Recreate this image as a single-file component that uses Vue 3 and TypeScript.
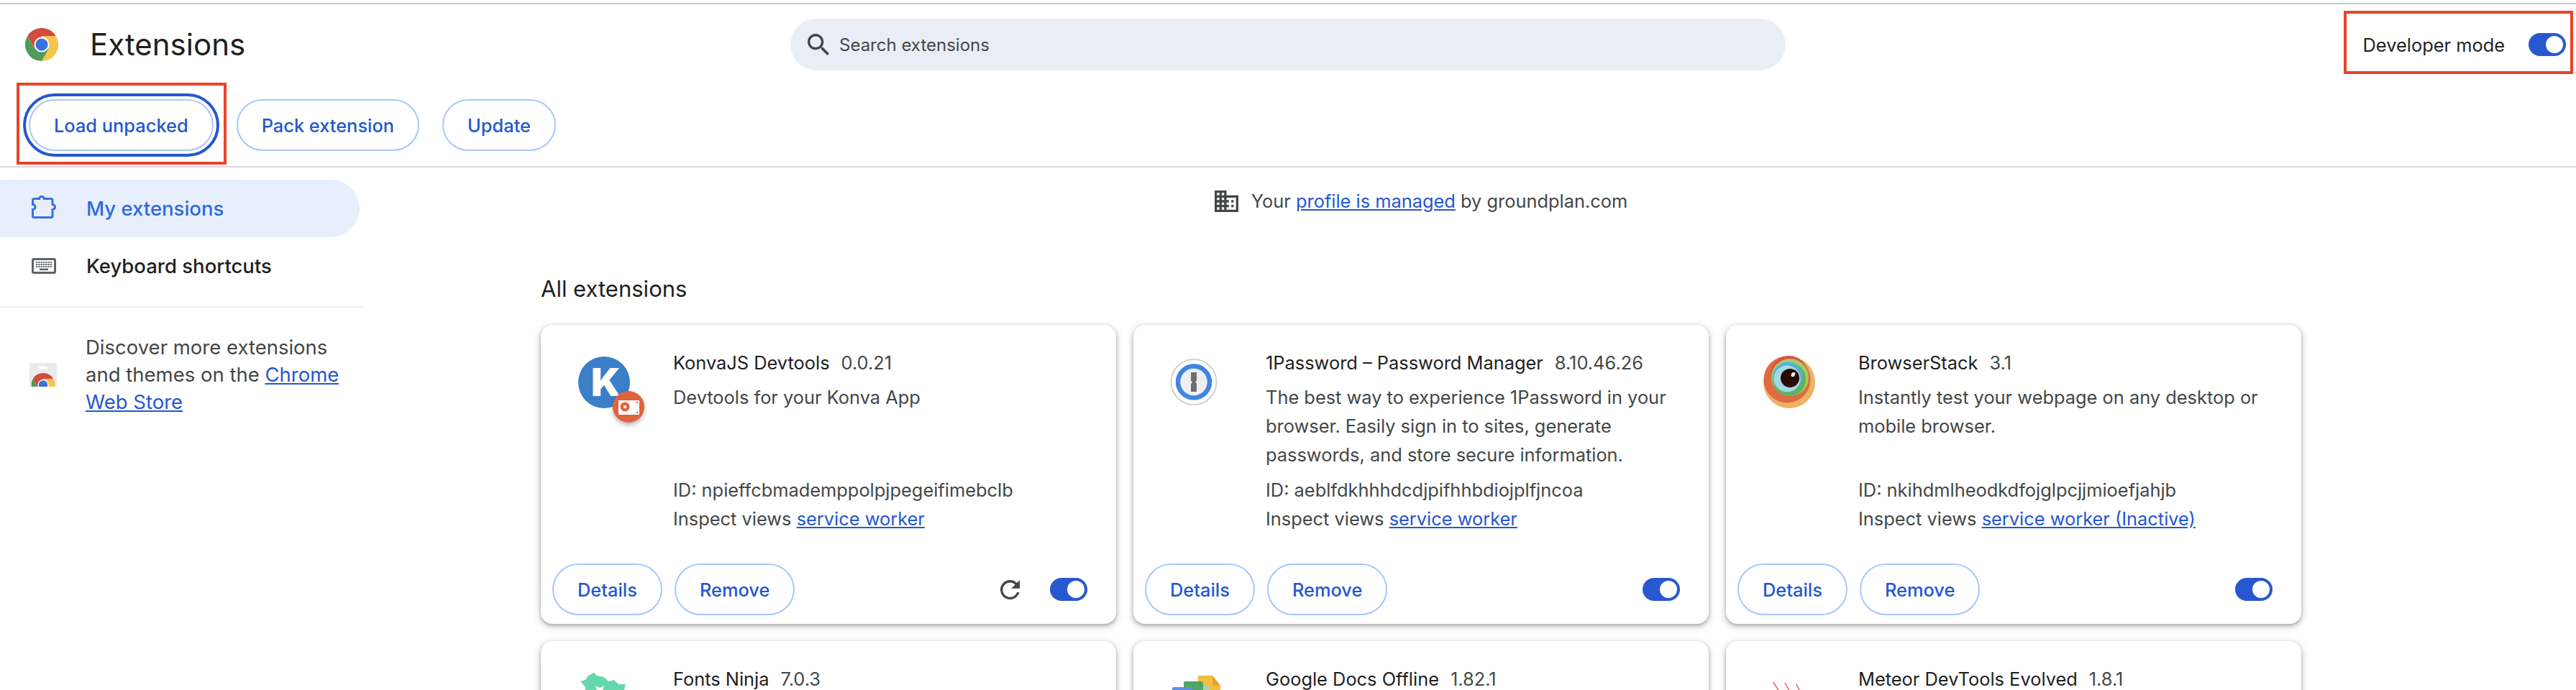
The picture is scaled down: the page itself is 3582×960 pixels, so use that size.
<script setup lang="ts">
interface Extension {
  name: string;
  version: string;
  icon: string;
  description?: string;
  id?: string;
  view?: string;
  reload?: boolean;
}

const extensions: Extension[] = [
  {
    name: 'KonvaJS Devtools',
    version: '0.0.21',
    icon: 'konva',
    description: 'Devtools for your Konva App',
    id: 'npieffcbmademppolpjpegeifimebclb',
    view: 'service worker',
    reload: true,
  },
  {
    name: '1Password – Password Manager',
    version: '8.10.46.26',
    icon: 'onepassword',
    description:
      'The best way to experience 1Password in your browser. Easily sign in to sites, generate passwords, and store secure information.',
    id: 'aeblfdkhhhdcdjpifhhbdiojplfjncoa',
    view: 'service worker',
  },
  {
    name: 'BrowserStack',
    version: '3.1',
    icon: 'browserstack',
    description: 'Instantly test your webpage on any desktop or mobile browser.',
    id: 'nkihdmlheodkdfojglpcjjmioefjahjb',
    view: 'service worker (Inactive)',
  },
  { name: 'Fonts Ninja', version: '7.0.3', icon: 'ninja' },
  { name: 'Google Docs Offline', version: '1.82.1', icon: 'docs' },
  { name: 'Meteor DevTools Evolved', version: '1.8.1', icon: 'meteor' },
];

const chromeSectors = [
  { d: 'M24 24L13.6 30 3.2 12A24 24 0 0 1 44.8 12H24Z', fill: '#d34b3a' },
  { d: 'M3.2 12L13.6 30 24 24 34.4 30 24 48A24 24 0 0 1 3.2 12Z', fill: '#4f9b58' },
  { d: 'M44.8 12H24L34.4 30 24 48A24 24 0 0 0 44.8 12Z', fill: '#f5c54c' },
];

// key rows of the keyboard shortcut icon
const keys: { x: number; y: number }[] = [];
for (let row = 0; row < 3; row++) {
  for (let col = 0; col < 7; col++) {
    keys.push({ x: 6 + col * 3.3, y: 5 + row * 3 });
  }
}
</script>

<template>
  <div class="page">
    <header class="toolbar">
      <div class="top-row">
        <div class="brand">
          <svg class="chrome-logo" viewBox="0 0 48 48">
            <path v-for="s in chromeSectors" :key="s.fill" :d="s.d" :fill="s.fill" />
            <circle cx="24" cy="24" r="11" fill="#fff" />
            <circle cx="24" cy="24" r="9" fill="#3a73e0" />
          </svg>
          <h1>Extensions</h1>
        </div>
        <div class="search">
          <svg class="search-icon" viewBox="3 3 17.5 17.5">
            <path d="M15.5 14h-.79l-.28-.27C15.41 12.59 16 11.11 16 9.5 16 5.91 13.09 3 9.5 3S3 5.91 3 9.5 5.91 16 9.5 16c1.61 0 3.09-.59 4.23-1.57l.27.28v.79l5 4.99L20.49 19l-4.99-5zm-6 0C7.01 14 5 11.99 5 9.5S7.01 5 9.5 5 14 7.01 14 9.5 11.99 14 9.5 14z" />
          </svg>
          <span>Search extensions</span>
        </div>
        <div class="dev-mode">
          <span>Developer mode</span>
          <span class="toggle"></span>
        </div>
      </div>
      <div class="dev-buttons">
        <button class="btn is-focused">Load unpacked</button>
        <button class="btn">Pack extension</button>
        <button class="btn">Update</button>
      </div>
    </header>

    <div class="layout">
      <aside class="sidebar">
        <a class="nav-item is-active">
          <svg class="nav-icon" viewBox="0 2 34 32" fill="none" stroke="#3b6fe0" stroke-width="3">
            <path d="M3.5 4.5h7a3.5 3 0 0 1 7 0h9.5a2 2 0 0 1 2 2v6a3.5 3.5 0 0 1 0 7v9a2 2 0 0 1-2 2H3.5a2 2 0 0 1-2-2v-9a3.5 3.5 0 0 0 0-7v-6a2 2 0 0 1 2-2z" />
          </svg>
          My extensions
        </a>
        <a class="nav-item">
          <svg class="nav-icon" viewBox="0 0 34 22">
            <rect x="0" y="0" width="34" height="22" rx="3" fill="#5f6368" />
            <rect x="3" y="3" width="28" height="16" fill="#fff" />
            <rect v-for="(k, i) in keys" :key="i" :x="k.x" :y="k.y" width="2.2" height="2" fill="#5f6368" />
            <rect x="11" y="14.5" width="12" height="2.6" fill="#5f6368" />
          </svg>
          Keyboard shortcuts
        </a>
        <div class="sidebar-divider"></div>
        <div class="discover">
          <svg class="store-icon" viewBox="0 0 38 33">
            <rect width="38" height="33" fill="#e8eaed" />
            <rect x="13" y="5" width="12" height="4" rx="2" fill="#fff" />
            <svg x="2.5" y="14" width="33" height="33" viewBox="0 0 48 48">
              <path v-for="s in chromeSectors" :key="s.fill" :d="s.d" :fill="s.fill" />
              <circle cx="24" cy="24" r="11" fill="#fff" />
              <circle cx="24" cy="24" r="9" fill="#3a73e0" />
            </svg>
          </svg>
          <p>Discover more extensions and themes on the <a class="link">Chrome Web Store</a></p>
        </div>
      </aside>

      <main class="content">
        <div class="managed">
          <svg class="managed-icon" viewBox="2 3 20 18" preserveAspectRatio="none">
            <path d="M12 7V3H2v18h20V7H12zM6 19H4v-2h2v2zm0-4H4v-2h2v2zm0-4H4V9h2v2zm0-4H4V5h2v2zm4 12H8v-2h2v2zm0-4H8v-2h2v2zm0-4H8V9h2v2zm0-4H8V5h2v2zm10 12h-8v-2h2v-2h-2v-2h2v-2h-2V9h8v10zm-2-8h-2v2h2v-2zm0 4h-2v2h2v-2z" />
          </svg>
          <span>Your <a class="link">profile is managed</a> by groundplan.com</span>
        </div>

        <h2 class="section-title">All extensions</h2>

        <div class="cards">
          <article v-for="ext in extensions" :key="ext.name" class="card">
            <div class="card-main">
              <svg class="ext-icon" viewBox="0 0 92 92">
                <defs>
                  <filter id="badge-shadow" x="-30%" y="-30%" width="160%" height="170%">
                    <feDropShadow dx="0" dy="3" stdDeviation="3" flood-color="#000" flood-opacity="0.3" />
                  </filter>
                </defs>
                <template v-if="ext.icon === 'konva'">
                  <circle cx="36" cy="36" r="36" fill="#3b7fc9" />
                  <text x="18" y="55" class="konva-k">K</text>
                  <circle cx="70" cy="70" r="22" fill="#e0633b" filter="url(#badge-shadow)" />
                  <rect x="56" y="61" width="29" height="20" rx="1" fill="#fff" />
                  <circle cx="65" cy="70" r="6.5" fill="#e0633b" />
                  <circle cx="65" cy="70" r="2.2" fill="#fff" />
                  <circle cx="82" cy="64" r="1.2" fill="#e0633b" />
                  <circle cx="82" cy="78" r="1.2" fill="#e0633b" />
                </template>
                <template v-else-if="ext.icon === 'onepassword'">
                  <circle cx="32" cy="35.5" r="31.5" fill="#fff" stroke="#d2d2d2" stroke-width="2" />
                  <circle cx="32" cy="35.5" r="22" fill="#efefef" stroke="#3f86e3" stroke-width="6.5" />
                  <path d="M28 22h8v11.5l-2 2 2 2V49h-8V38.5l2-3-2-2z" fill="#6d6d6d" />
                </template>
                <template v-else-if="ext.icon === 'browserstack'">
                  <circle cx="36" cy="36" r="36" fill="#eeb266" />
                  <circle cx="33" cy="32" r="32.5" fill="#de6b41" />
                  <circle cx="36" cy="25" r="26" fill="#dd4f47" />
                  <circle cx="37" cy="29" r="26" fill="#a7c95f" />
                  <circle cx="36" cy="32" r="23" fill="#5db35d" />
                  <circle cx="34" cy="28" r="20.5" fill="#56b3d9" />
                  <circle cx="33" cy="31" r="18.5" fill="#a5d8e6" />
                  <circle cx="37" cy="30" r="13" fill="#2a0a05" />
                  <ellipse cx="41.5" cy="25" rx="2.4" ry="3.4" fill="#fff" transform="rotate(35 41.5 25)" />
                </template>
                <template v-else-if="ext.icon === 'ninja'">
                  <path d="M14 4l8-4 4 4 10 2 6 6 8-2 6 6h10l-2 8-6 16H10V20L3 12l7-2z" fill="#66d6ac" />
                  <path d="M24 18l6 3 6-3-2 7h-8z" fill="#fff" />
                </template>
                <template v-else-if="ext.icon === 'docs'">
                  <path d="M38 4h20l11 14v60H34z" fill="#f2be42" />
                  <path d="M58 4l11 14H58z" fill="#e3a72f" />
                  <rect x="18" y="12" width="27" height="60" rx="2" fill="#4ea567" />
                  <rect x="45" y="18" width="8" height="54" fill="#a9d3b0" />
                  <rect x="2" y="20" width="28" height="50" rx="2" fill="#5f8de8" />
                </template>
                <template v-else>
                  <g stroke="#e0645a" stroke-width="1.5">
                    <path d="M14 13l12 20" />
                    <path d="M30 14l10 19" />
                    <path d="M46 16l8 17" />
                  </g>
                </template>
              </svg>
              <div class="card-text">
                <div class="card-name">{{ ext.name }}<span class="card-version">{{ ext.version }}</span></div>
                <template v-if="ext.id">
                  <p class="card-desc">{{ ext.description }}</p>
                  <div class="card-line">ID: {{ ext.id }}</div>
                  <div class="card-line">Inspect views <a class="link">{{ ext.view }}</a></div>
                </template>
              </div>
            </div>
            <div v-if="ext.id" class="card-actions">
              <button class="btn">Details</button>
              <button class="btn">Remove</button>
              <div class="card-controls">
                <svg v-if="ext.reload" class="reload" viewBox="4 4 16 16">
                  <path d="M17.65 6.35C16.2 4.9 14.21 4 12 4c-4.42 0-7.99 3.58-7.99 8s3.57 8 7.99 8c3.73 0 6.84-2.55 7.73-6h-2.08c-.82 2.33-3.04 4-5.65 4-3.31 0-6-2.69-6-6s2.69-6 6-6c1.66 0 3.14.69 4.22 1.78L13 11h7V4l-2.35 2.35z" />
                </svg>
                <span class="toggle"></span>
              </div>
            </div>
          </article>
        </div>
      </main>
    </div>

    <!-- annotation boxes from the screenshot -->
    <div class="marker marker-load"></div>
    <div class="marker marker-dev"></div>
  </div>
</template>

<style scoped>
.page {
  position: relative;
  height: 960px;
  padding-top: 4px;
  box-sizing: border-box;
  overflow: hidden;
  background: #fff;
  color: #1f1f1f;
  font-family: Inter, "Liberation Sans", sans-serif;
  font-size: 25.4px;
}

.toolbar {
  border-top: 2px solid #cccccc;
  border-bottom: 2px solid #d8d8dc;
}

.top-row {
  display: grid;
  grid-template-columns: 1fr 1384px 1fr;
  align-items: center;
  padding-top: 20px;
}

.brand {
  display: flex;
  align-items: center;
  gap: 44px;
  padding-left: 35px;
}

.chrome-logo {
  width: 46px;
  height: 46px;
}

.brand h1 {
  margin: 0;
  font-size: 42px;
  font-weight: 400;
  line-height: 52px;
}

.search {
  display: flex;
  align-items: center;
  gap: 14px;
  height: 72px;
  padding-left: 24px;
  font-size: 24px;
  border-radius: 36px;
  background: #e9eef6;
  color: #444746;
}

.search-icon {
  width: 30px;
  height: 30px;
  fill: #444746;
}

.dev-mode {
  display: flex;
  align-items: center;
  justify-content: flex-end;
  gap: 33px;
  padding-right: 14px;
}

.toggle {
  position: relative;
  display: block;
  width: 52px;
  height: 32px;
  border-radius: 16px;
  background: #2858cf;
}

.toggle::after {
  content: "";
  position: absolute;
  top: 4px;
  right: 4px;
  width: 24px;
  height: 24px;
  border-radius: 50%;
  background: #fff;
}

.dev-buttons {
  display: flex;
  gap: 32px;
  margin-top: 40px;
  padding: 0 0 21px 40px;
}

.btn {
  height: 72px;
  padding: 0 33px;
  border: 2px solid #a8c7fa;
  border-radius: 36px;
  background: #fff;
  color: #2557cf;
  font-family: inherit;
  font-size: 25.4px;
  font-weight: 500;
}

.btn.is-focused {
  outline: 4px solid #2557cf;
  outline-offset: 4px;
}

.layout {
  display: flex;
}

.sidebar {
  flex: none;
  width: 504px;
  padding-top: 17px;
}

.nav-item {
  display: flex;
  align-items: center;
  gap: 42px;
  width: 500px;
  height: 80px;
  padding-left: 44px;
  box-sizing: border-box;
  border-radius: 0 40px 40px 0;
  font-size: 27.5px;
  font-weight: 500;
}

.nav-item.is-active {
  background: #e7effc;
  color: #2f69de;
}

.nav-icon {
  width: 34px;
  height: auto;
  flex: none;
  overflow: visible;
}

.sidebar-divider {
  height: 2px;
  margin-top: 16px;
  background: #eeeeee;
}

.discover {
  display: flex;
  align-items: center;
  gap: 40px;
  margin-top: 36px;
  padding-left: 41px;
  font-size: 27.5px;
  color: #444746;
}

.store-icon {
  flex: none;
  width: 38px;
  height: 33px;
}

.discover p {
  width: 370px;
  margin: 0;
  line-height: 38px;
}

.link {
  color: #2557cf;
  text-decoration: underline;
}

.content {
  flex: 1;
  padding: 27px 0 0 248px;
}

.managed {
  display: flex;
  align-items: center;
  justify-content: center;
  gap: 18px;
  width: 2448px;
  line-height: 40px;
  color: #444746;
}

.managed-icon {
  width: 33px;
  height: 30px;
  fill: #444746;
}

.section-title {
  margin: 82px 0 30px;
  font-size: 31px;
  font-weight: 400;
  line-height: 40px;
}

.cards {
  display: grid;
  grid-template-columns: repeat(3, 800px);
  gap: 24px;
}

.card {
  display: flex;
  flex-direction: column;
  height: 416px;
  box-sizing: border-box;
  border-radius: 16px;
  background: #fff;
  box-shadow: 0 2px 4px rgba(60, 64, 67, 0.35), 0 3px 10px 2px rgba(60, 64, 67, 0.2);
}

.card-main {
  display: flex;
  flex: 1;
  padding: 33px 0 0 52px;
}

.ext-icon {
  flex: none;
  width: 92px;
  height: 92px;
  margin: 11px 40px 0 0;
  overflow: visible;
}

.konva-k {
  fill: #fff;
  font-family: Inter, "Liberation Sans", sans-serif;
  font-size: 54px;
  font-weight: 900;
}

.card-text {
  width: 590px;
  line-height: 40px;
  color: #444746;
}

.card-name {
  color: #1f1f1f;
}

.card-version {
  margin-left: 16px;
  color: #444746;
}

.card-desc {
  height: 120px;
  margin: 8px 0 9px;
}

.card-actions {
  display: flex;
  align-items: center;
  gap: 17px;
  padding: 0 40px 12px 16px;
}

.card-controls {
  display: flex;
  align-items: center;
  gap: 42px;
  margin-left: auto;
}

.reload {
  width: 27px;
  height: 27px;
  fill: #444746;
}

.marker {
  position: absolute;
  box-sizing: border-box;
  border: 4px solid #e8442a;
}

.marker-load {
  left: 23px;
  top: 115px;
  width: 292px;
  height: 114px;
}

.marker-dev {
  left: 3259px;
  top: 15px;
  width: 319px;
  height: 88px;
}
</style>

<style>
html,
body {
  margin: 0;
  background: #fff;
}
</style>
